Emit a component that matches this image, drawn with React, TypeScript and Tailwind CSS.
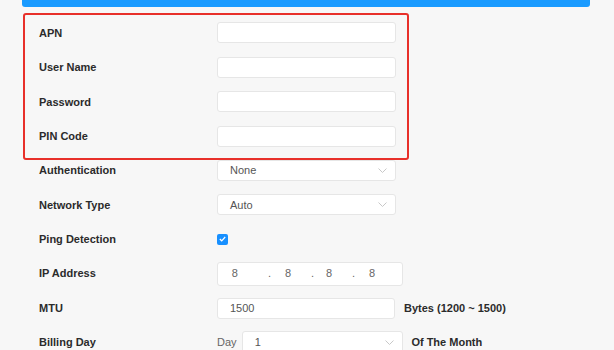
import React from 'react'

const Chevron = () => (
  <svg width="9" height="5" viewBox="0 0 9 5" fill="none" className="shrink-0">
    <path d="M0.5 0.5 L4.5 4.5 L8.5 0.5" stroke="#c8c8c8" strokeWidth="1" />
  </svg>
)

const TextBox = ({ value = '', w = 'w-[179px]' }: { value?: string; w?: string }) => (
  <div className={`${w} h-[21px] shrink-0 bg-white border border-[#e6e6e6] rounded-[3px] flex items-center pl-[12px] text-[11px] text-[#555]`}>
    {value}
  </div>
)

const SelectBox = ({ value, w = 'w-[179px]', h = 'h-[21px]' }: { value: string; w?: string; h?: string }) => (
  <div className={`${w} ${h} shrink-0 bg-white border border-[#e6e6e6] rounded-[3px] flex items-center justify-between pl-[12px] pr-[8px] text-[11px] text-[#555]`}>
    <span>{value}</span>
    <Chevron />
  </div>
)

const Row = ({ label, children }: { label: string; children: React.ReactNode }) => (
  <div className="h-[34.4px] flex items-center">
    <div className="w-[217px] shrink-0 pl-[39px] text-[11px] font-bold text-[#2b2b2b]">{label}</div>
    {children}
  </div>
)

export default function App() {
  return (
    <div
      className="relative w-[614px] h-[350px] overflow-hidden bg-[#f7f7f7]"
      style={{ fontFamily: '"Liberation Sans", Arial, sans-serif' }}
    >
      <div className="ml-[22px] w-[568px] h-[7px] bg-[#1a9bff] rounded-b-[3px]" />

      <div className="mt-[8.8px] flex flex-col">
        <Row label="APN">
          <TextBox />
        </Row>
        <Row label="User Name">
          <TextBox />
        </Row>
        <Row label="Password">
          <TextBox />
        </Row>
        <Row label="PIN Code">
          <TextBox />
        </Row>
        <Row label="Authentication">
          <SelectBox value="None" />
        </Row>
        <Row label="Network Type">
          <SelectBox value="Auto" />
        </Row>
        <Row label="Ping Detection">
          <div className="w-[11px] h-[11px] rounded-[2px] bg-[#1890ff] flex items-center justify-center">
            <svg width="7" height="6" viewBox="0 0 7 6" fill="none">
              <path d="M0.8 3 L2.7 4.8 L6.2 1" stroke="white" strokeWidth="1.2" />
            </svg>
          </div>
        </Row>
        <Row label="IP Address">
          <div className="w-[186px] h-[24px] shrink-0 bg-white border border-[#e6e6e6] rounded-[3px] flex items-center pl-[13.7px] text-[11px] text-[#666]">
            <span className="w-[36.3px]">8</span>
            <span className="w-[17px]">.</span>
            <span className="w-[26px]">8</span>
            <span className="w-[15px]">.</span>
            <span className="w-[26px]">8</span>
            <span className="w-[17px]">.</span>
            <span>8</span>
          </div>
        </Row>
        <Row label="MTU">
          <TextBox value="1500" w="w-[178px]" />
          <span className="ml-[9px] text-[11px] font-bold text-[#2b2b2b]">Bytes (1200 ~ 1500)</span>
        </Row>
        <Row label="Billing Day">
          <span className="w-[24.7px] shrink-0 text-[11px] text-[#666]">Day</span>
          <SelectBox value="1" w="w-[161px]" h="h-[24px]" />
          <span className="ml-[8.7px] text-[11px] font-bold text-[#2b2b2b]">Of The Month</span>
        </Row>
      </div>

      <div className="absolute left-[22.7px] top-[13.3px] w-[386px] h-[147px] border-2 border-[#e8302a] rounded-[3px] pointer-events-none" />
    </div>
  )
}
